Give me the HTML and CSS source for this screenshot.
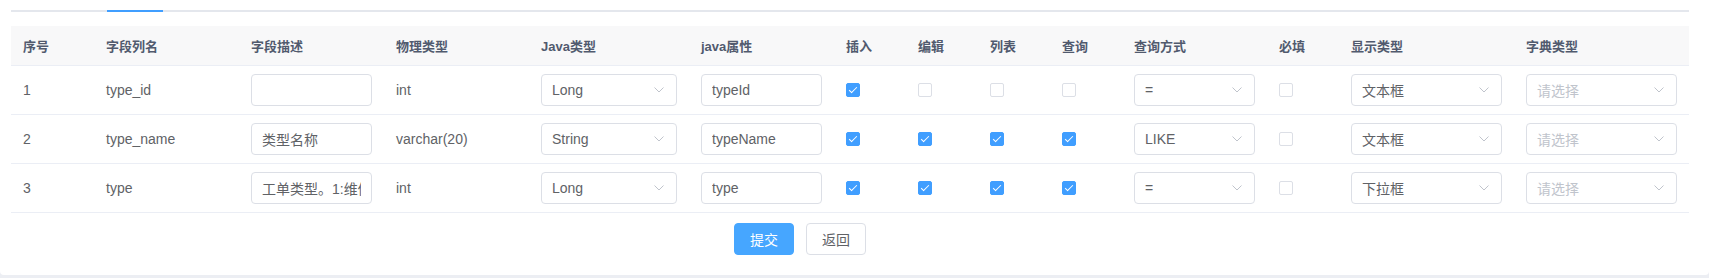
FILE: index.html
```html
<!DOCTYPE html>
<html lang="zh-CN">
<head>
  <meta charset="UTF-8">
  <title>生成配置</title>
  <link rel="stylesheet" href="styles.css">
</head>
<body>
  <div class="page">
    <div class="tabs">
      <div class="tabs-line"><div class="tab-active"></div></div>
    </div>

    <table class="field-table">
      <colgroup>
        <col style="width:83px"><col style="width:145px"><col style="width:145px"><col style="width:145px">
        <col style="width:160px"><col style="width:145px"><col style="width:72px"><col style="width:72px">
        <col style="width:72px"><col style="width:72px"><col style="width:145px"><col style="width:72px">
        <col style="width:175px"><col style="width:175px">
      </colgroup>
      <thead>
        <tr>
          <th>序号</th>
          <th>字段列名</th>
          <th>字段描述</th>
          <th>物理类型</th>
          <th>Java类型</th>
          <th>java属性</th>
          <th>插入</th>
          <th>编辑</th>
          <th>列表</th>
          <th>查询</th>
          <th>查询方式</th>
          <th>必填</th>
          <th>显示类型</th>
          <th>字典类型</th>
        </tr>
      </thead>
      <tbody>
        <tr>
          <td>1</td>
          <td>type_id</td>
          <td><input class="input" type="text" value=""></td>
          <td>int</td>
          <td><div class="select"><span>Long</span><svg class="arrow" viewBox="0 0 10 6"><path d="M0.5 0.5 L5 5 L9.5 0.5"/></svg></div></td>
          <td><input class="input" type="text" value="typeId"></td>
          <td><span class="checkbox checked"></span></td>
          <td><span class="checkbox"></span></td>
          <td><span class="checkbox"></span></td>
          <td><span class="checkbox"></span></td>
          <td><div class="select"><span>=</span><svg class="arrow" viewBox="0 0 10 6"><path d="M0.5 0.5 L5 5 L9.5 0.5"/></svg></div></td>
          <td><span class="checkbox"></span></td>
          <td><div class="select"><span>文本框</span><svg class="arrow" viewBox="0 0 10 6"><path d="M0.5 0.5 L5 5 L9.5 0.5"/></svg></div></td>
          <td><div class="select"><span class="placeholder">请选择</span><svg class="arrow" viewBox="0 0 10 6"><path d="M0.5 0.5 L5 5 L9.5 0.5"/></svg></div></td>
        </tr>
        <tr>
          <td>2</td>
          <td>type_name</td>
          <td><input class="input" type="text" value="类型名称"></td>
          <td>varchar(20)</td>
          <td><div class="select"><span>String</span><svg class="arrow" viewBox="0 0 10 6"><path d="M0.5 0.5 L5 5 L9.5 0.5"/></svg></div></td>
          <td><input class="input" type="text" value="typeName"></td>
          <td><span class="checkbox checked"></span></td>
          <td><span class="checkbox checked"></span></td>
          <td><span class="checkbox checked"></span></td>
          <td><span class="checkbox checked"></span></td>
          <td><div class="select"><span>LIKE</span><svg class="arrow" viewBox="0 0 10 6"><path d="M0.5 0.5 L5 5 L9.5 0.5"/></svg></div></td>
          <td><span class="checkbox"></span></td>
          <td><div class="select"><span>文本框</span><svg class="arrow" viewBox="0 0 10 6"><path d="M0.5 0.5 L5 5 L9.5 0.5"/></svg></div></td>
          <td><div class="select"><span class="placeholder">请选择</span><svg class="arrow" viewBox="0 0 10 6"><path d="M0.5 0.5 L5 5 L9.5 0.5"/></svg></div></td>
        </tr>
        <tr>
          <td>3</td>
          <td>type</td>
          <td><input class="input" type="text" value="工单类型。1:维修 2:保养"></td>
          <td>int</td>
          <td><div class="select"><span>Long</span><svg class="arrow" viewBox="0 0 10 6"><path d="M0.5 0.5 L5 5 L9.5 0.5"/></svg></div></td>
          <td><input class="input" type="text" value="type"></td>
          <td><span class="checkbox checked"></span></td>
          <td><span class="checkbox checked"></span></td>
          <td><span class="checkbox checked"></span></td>
          <td><span class="checkbox checked"></span></td>
          <td><div class="select"><span>=</span><svg class="arrow" viewBox="0 0 10 6"><path d="M0.5 0.5 L5 5 L9.5 0.5"/></svg></div></td>
          <td><span class="checkbox"></span></td>
          <td><div class="select"><span>下拉框</span><svg class="arrow" viewBox="0 0 10 6"><path d="M0.5 0.5 L5 5 L9.5 0.5"/></svg></div></td>
          <td><div class="select"><span class="placeholder">请选择</span><svg class="arrow" viewBox="0 0 10 6"><path d="M0.5 0.5 L5 5 L9.5 0.5"/></svg></div></td>
        </tr>
      </tbody>
    </table>

    <div class="actions">
      <button class="btn btn-primary">提交</button>
      <button class="btn">返回</button>
    </div>
  </div>
</body>
</html>
```

FILE: styles.css
```css
body {
  margin: 0;
  background-color: #eceef3;
  font-family: "Liberation Sans", "Noto Sans CJK SC", sans-serif;
  color: #606266;
}
.page {
  background-color: #fff;
  height: 275px;
  padding: 0 20px 0 11px;
  box-sizing: border-box;
  border-radius: 0 0 4px 4px;
}
.tabs {
  padding-top: 10px;
}
.tabs-line {
  height: 2px;
  background-color: #e4e7ed;
}
.tab-active {
  margin-left: 96px;
  width: 56px;
  height: 2px;
  background-color: #409eff;
}
.field-table {
  width: 1678px;
  margin-top: 14px;
  table-layout: fixed;
  border-collapse: separate;
  border-spacing: 0;
}
.field-table th {
  box-sizing: border-box;
  height: 40px;
  padding: 0 12px;
  text-align: left;
  font-size: 13px;
  font-weight: bold;
  color: #515a6e;
  background-color: #f8f8f9;
  border-bottom: 1px solid #ebeef5;
}
.field-table td {
  box-sizing: border-box;
  height: 49px;
  padding: 0 12px;
  font-size: 14px;
  color: #606266;
  border-bottom: 1px solid #ebeef5;
  vertical-align: middle;
}
.input {
  display: block;
  width: 100%;
  height: 32px;
  box-sizing: border-box;
  padding: 0 10px;
  border: 1px solid #dcdfe6;
  border-radius: 4px;
  font-family: inherit;
  font-size: 14px;
  color: #606266;
  outline: none;
}
.select {
  display: flex;
  align-items: center;
  justify-content: space-between;
  height: 32px;
  box-sizing: border-box;
  padding: 0 12px 0 10px;
  border: 1px solid #dcdfe6;
  border-radius: 4px;
  font-size: 14px;
  color: #606266;
}
.select .placeholder {
  color: #c0c4cc;
}
.arrow {
  width: 10px;
  height: 6px;
  fill: none;
  stroke: #c0c4cc;
  stroke-width: 1;
}
.checkbox {
  display: block;
  position: relative;
  width: 14px;
  height: 14px;
  box-sizing: border-box;
  border: 1px solid #dcdfe6;
  border-radius: 2px;
  background-color: #fff;
}
.checkbox.checked {
  background-color: #409eff;
  border-color: #409eff;
}
.checkbox.checked::after {
  content: "";
  position: absolute;
  left: 4px;
  top: 1px;
  width: 3px;
  height: 7px;
  border: 1px solid #fff;
  border-left: 0;
  border-top: 0;
  transform: rotate(45deg);
}
.actions {
  display: flex;
  gap: 12px;
  padding: 10px 0 0 723px;
}
.btn {
  width: 60px;
  height: 32px;
  padding: 0;
  border: 1px solid #dcdfe6;
  border-radius: 4px;
  background-color: #fff;
  color: #606266;
  font-family: inherit;
  font-size: 14px;
  cursor: pointer;
}
.btn-primary {
  background-color: #46a6ff;
  border-color: #46a6ff;
  color: #fff;
}
```
